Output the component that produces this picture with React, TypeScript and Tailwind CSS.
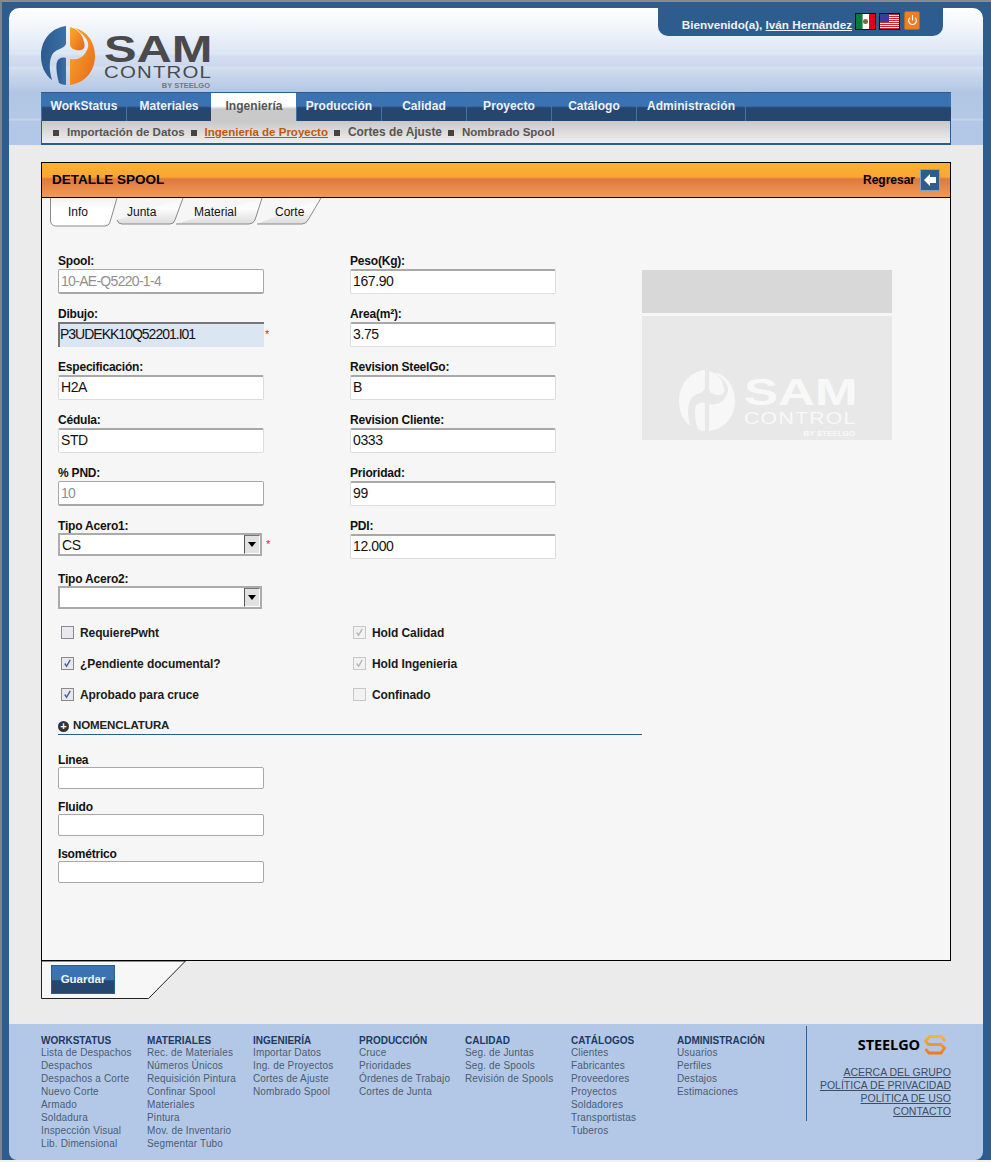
import React from "react";

const nav = ["WorkStatus", "Materiales", "Ingeniería", "Producción", "Calidad", "Proyecto", "Catálogo", "Administración"];
const footer: [string, string[]][] = [
  ["WORKSTATUS", ["Lista de Despachos", "Despachos", "Despachos a Corte", "Nuevo Corte", "Armado", "Soldadura", "Inspección Visual", "Lib. Dimensional"]],
  ["MATERIALES", ["Rec. de Materiales", "Números Únicos", "Requisición Pintura", "Confinar Spool", "Materiales", "Pintura", "Mov. de Inventario", "Segmentar Tubo"]],
  ["INGENIERÍA", ["Importar Datos", "Ing. de Proyectos", "Cortes de Ajuste", "Nombrado Spool"]],
  ["PRODUCCIÓN", ["Cruce", "Prioridades", "Órdenes de Trabajo", "Cortes de Junta"]],
  ["CALIDAD", ["Seg. de Juntas", "Seg. de Spools", "Revisión de Spools"]],
  ["CATÁLOGOS", ["Clientes", "Fabricantes", "Proveedores", "Proyectos", "Soldadores", "Transportistas", "Tuberos"]],
  ["ADMINISTRACIÓN", ["Usuarios", "Perfiles", "Destajos", "Estimaciones"]],
];

function LogoMark({ mono, className }: { mono?: boolean; className: string }) {
  const a = mono ? "#f7f7f7" : "url(#lb)";
  const b = mono ? "#f7f7f7" : "url(#lo)";
  return (
    <svg viewBox="0 0 54 59" className={className}>
      {!mono && (
        <defs>
          <linearGradient id="lb" x1="0" y1="0" x2="1" y2="0"><stop offset="0" stopColor="#2b5a8e" /><stop offset="1" stopColor="#3a70a8" /></linearGradient>
          <linearGradient id="lo" x1="0" y1="0" x2="1" y2="1"><stop offset="0" stopColor="#f9ab2e" /><stop offset="0.5" stopColor="#f28a24" /><stop offset="1" stopColor="#e2681c" /></linearGradient>
        </defs>
      )}
      <path d="M25 0C10 2 0 14 0 30c0 10 4 19 11 24-3-10-3-19 0-25 4-7 11-5 14-11Z" fill={a} />
      <path d="M25 59V32c-7-2-9 3-9.500 6-.5 5 .5 12 2.500 19 2 1 5 2 7 2Z" fill={a} />
      <path d="M29 1c5 1 9 4 12 9 4 10 3 13-1 14-5 1-11-1-11-6Z" fill={b} />
      <path d="M34 2c12 3 20 14 20 28 0 15-10 27-25 29V33c7 1 10-1 13-3 8-9 6-15 0-21-3-3-5-5-8-7Z" fill={b} />
    </svg>
  );
}

function Logo() {
  return (
    <div className="flex h-[60px] items-start">
      <LogoMark className="h-[59px] w-[54px]" />
      <div className="mt-[10px] ml-[9px] w-[106px] text-[#4a4a4c]">
        <div className="h-[28px] origin-left scale-x-[1.32] text-[37px] leading-[28px] font-bold">SAM</div>
        <div className="mt-[2px] h-[13px] origin-left scale-x-[1.2] text-[17px] leading-[13px] tracking-[1px] whitespace-nowrap">CONTROL</div>
        <div className="mt-[2px] text-right text-[7.500px] leading-[9px] font-bold text-[#777]">BY STEELGO</div>
      </div>
    </div>
  );
}

function Label({ text }: { text: string }) {
  return <div className="h-[14px] text-[12px] leading-[12px] font-bold tracking-[-0.2px] text-[#111]">{text}</div>;
}

function Field({ label, value, variant = "normal", star }: { label: string; value: string; variant?: "normal" | "disabled" | "focus"; star?: boolean }) {
  const cls =
    variant === "disabled"
      ? "border border-b-2 border-[#a8a8a8] bg-white text-[#8f8f8f] rounded-[2px] tracking-[-0.7px] px-[2px] pt-px"
      : variant === "focus"
        ? "border-t-2 border-l-2 border-[#777] bg-[#dce6f2] text-[#111] tracking-[-1px] pb-[2px]"
        : "border border-t-2 border-[#dcdcdc] border-t-[#a8a8a8] bg-white text-[#111] rounded-[2px] tracking-[-0.4px] px-[2px] pb-[2px]";
  return (
    <div className="h-[53px]">
      <Label text={label} />
      <div className="flex items-center">
        <div className={`flex h-[25px] w-[206px] items-center text-[14px] ${cls}`}>{value}</div>
        {star && <span className="ml-[1px] text-[11px] text-[#e0202c]">*</span>}
      </div>
    </div>
  );
}

function Select({ label, value, star }: { label: string; value: string; star?: boolean }) {
  return (
    <div className="h-[53px]">
      <Label text={label} />
      <div className="-mt-px flex items-center">
        <div className="flex h-[23px] w-[204px] items-center border-2 border-[#ababab] bg-white pl-[2px] text-[14px] tracking-[-0.3px] text-[#111]">
          <span className="pt-[2px]">{value}</span>
          <span className="ml-auto flex h-[19px] w-[16px] items-center justify-center border border-white border-t-[#777] border-l-[#555] bg-[#e2e2e2]">
            <span className="h-0 w-0 border-x-[4px] border-t-[5px] border-x-transparent border-t-black" />
          </span>
        </div>
        {star && <span className="ml-[4px] text-[11px] text-[#e0202c]">*</span>}
      </div>
    </div>
  );
}

function Check({ label, checked, off }: { label: string; checked?: boolean; off?: boolean }) {
  return (
    <div className="flex h-[31px] items-center pl-[3px]">
      <span className={`flex h-[13px] w-[13px] items-center justify-center border ${off ? "border-[#c8c8c8] bg-[#f2f2f2]" : "border-[#8a8a8a] bg-[#e8e8ee]"}`}>
        {checked && (
          <svg viewBox="0 0 12 12" className="h-[11px] w-[11px]">
            <path d="M3 6l2 3 4-7" fill="none" stroke={off ? "#b5b5b5" : "#4a5a96"} strokeWidth="1.500" />
          </svg>
        )}
      </span>
      <span className="ml-[6px] text-[12px] font-bold tracking-[-0.1px] text-[#1a1a1a]">{label}</span>
    </div>
  );
}

function Small({ label }: { label: string }) {
  return (
    <div className="h-[47px]">
      <div className="h-[14px] text-[12px] leading-[14px] font-bold tracking-[-0.2px] text-[#111]">{label}</div>
      <div className="h-[22px] w-[206px] rounded-[2px] border border-[#a8a8a8] bg-white" />
    </div>
  );
}

function Tab({ label, d, w, h, ml, active, tx }: { label: string; d: string; w: number; h: number; ml: string; active?: boolean; tx: string }) {
  return (
    <div className={`relative ${ml} ${active ? "z-10" : ""}`} style={{ width: w, height: h }}>
      <svg viewBox={`0 0 ${w} ${h}`} className="absolute inset-0" style={{ width: w, height: h }}>
        <defs>
          <linearGradient id="tabg" x1="0" y1="0" x2="0" y2="1"><stop offset="0" stopColor="#f6f6f6" /><stop offset="0.4" stopColor="#fdfdfd" /><stop offset="1" stopColor="#dcdcdc" /></linearGradient>
          <linearGradient id="tabw" x1="0" y1="0" x2="0" y2="1"><stop offset="0" stopColor="#f2f2f2" /><stop offset="0.4" stopColor="#ffffff" /></linearGradient>
        </defs>
        <path d={d} fill={active ? "url(#tabw)" : "url(#tabg)"} stroke="#8a8a8a" />
      </svg>
      <span className={`relative block pt-[7px] text-[12px] leading-[14px] text-[#111] ${tx}`}>{label}</span>
    </div>
  );
}

export default function App() {
  return (
    <div className="h-[1162px] w-[991px] overflow-hidden bg-[#f2f2f2] font-['Liberation_Sans',Arial,sans-serif]">
      <div className="h-[1160px] border-t-2 border-l-2 border-t-[#8b8b8b] border-l-[#7b8694] bg-[#2d5d8e] pt-[6px] pr-[8px] pl-[7px]">
        <div className="overflow-hidden rounded-t-[10px] rounded-b-[8px]">
          {/* header */}
          <header className="relative h-[137px] bg-[linear-gradient(180deg,#ffffff_0px,#eef3fa_24px,#dde6f4_44px,#e2e9f5_45px,#d2def0_48px,#ccd9ed_58px,#d5dff0_59px,#c4d3ea_70px,#bccde7_78px,#b0c6e4_84px,#b5c9e6_110px,#c5d5ec_112px,#b3c8e6_113px,#b3c8e6_137px)] pt-[18px] pl-[32px]">
            <div className="absolute top-0 right-[40px] flex h-[28px] w-[285px] justify-end rounded-b-[10px] bg-[#2d5d8e] pr-[23px]">
              <span className="mt-[9px] mr-[1px] text-[11.700px] leading-[16px] font-bold whitespace-nowrap text-[#eef2f7]">
                Bienvenido(a), <span className="underline">Iván Hernández</span>
              </span>
              <svg viewBox="0 0 21 17" className="mt-[5px] ml-[2px] h-[17px] w-[21px]">
                <rect width="21" height="17" fill="#111" />
                <rect x="1" y="1" width="6.500" height="15" fill="#0a7a3e" /><rect x="7.500" y="1" width="6.500" height="15" fill="#fff" /><rect x="14" y="1" width="6" height="15" fill="#e4001b" />
                <circle cx="10.500" cy="8.500" r="2.500" fill="#7a6a3a" />
              </svg>
              <svg viewBox="0 0 21 17" className="mt-[5px] ml-[3px] h-[17px] w-[21px]">
                <rect width="21" height="17" fill="#111" />
                <rect x="1" y="1" width="19" height="15" fill="#fff" />
                {[1, 3, 5, 7, 9, 11, 13, 15].map((y) => <rect key={y} x="1" y={y} width="19" height="1" fill="#d8222e" />)}
                <rect x="1" y="1" width="9" height="8" fill="#3c3b9c" />
              </svg>
              <span className="mt-[3px] ml-[4px] flex h-[19px] w-[16px] items-center justify-center rounded-[2px] border border-[#b5651d] bg-[#ef7d22]">
                <svg viewBox="0 0 12 14" className="h-[13px] w-[11px]">
                  <path d="M6 1v6M3.200 4A4.200 4.200 0 1 0 8.800 4" fill="none" stroke="#fff" strokeWidth="1.200" />
                </svg>
              </span>
            </div>
            <Logo />
            <nav className="mt-[6px] h-[53px] w-[910px]">
              <div className="flex h-[29px] border-t border-[#2d5d8e] bg-[linear-gradient(180deg,#3a72b2_0px,#3a72b2_13px,#2c5a8e_14px,#24466f_15px,#24466f_100%)]">
                {nav.map((n, i) => (
                  <div
                    key={n}
                    className={`flex items-center justify-center border-l pb-[2px] text-[12px] font-bold tracking-[0.05px] ${
                      i === 7 ? "w-[110px] border-r" : "w-[85px]"
                    } ${i === 2
                      ? "border-transparent bg-[linear-gradient(180deg,#fff_0px,#fff_13px,#c9c9c9_16px,#c9c9c9_100%)] text-[#555]"
                      : "border-[#3f74ab] text-[#eef2f7]"}`}
                  >
                    {n}
                  </div>
                ))}
              </div>
              <div className="flex h-[24px] items-center border-x border-b-2 border-[#2d5d8e] bg-[linear-gradient(180deg,#c8c8c8,#efefef)] pt-px pl-[11px] text-[11.500px] font-bold text-[#555]">
                <i className="mr-[8px] h-[6px] w-[6px] bg-[#444]" />
                <span>Importación de Datos</span>
                <i className="mr-[8px] ml-[6px] h-[6px] w-[6px] bg-[#444]" />
                <span className="text-[#c4560c] underline">Ingeniería de Proyecto</span>
                <i className="mr-[8px] ml-[6px] h-[6px] w-[6px] bg-[#444]" />
                <span className="text-[11.900px]">Cortes de Ajuste</span>
                <i className="mr-[8px] ml-[6px] h-[6px] w-[6px] bg-[#444]" />
                <span>Nombrado Spool</span>
              </div>
            </nav>
          </header>

          {/* content */}
          <main className="h-[879px] bg-[#ebebeb] pt-[17px] pl-[32px]">
            <div className="h-[799px] w-[910px] border border-black bg-[#f6f6f6]">
              <div className="flex h-[35px] items-center justify-between border-b border-black bg-[linear-gradient(180deg,#fbb034_0px,#f8a733_14px,#e0773f_16px,#ef9c55_100%)] pr-[10px] pl-[10px]">
                <span className="text-[13.500px] font-bold text-black">DETALLE SPOOL</span>
                <span className="flex items-center text-[12px] font-bold text-black">
                  Regresar
                  <span className="ml-[5px] flex h-[22px] w-[20px] items-center justify-center border border-[#7fa3cc] bg-[#2d5d8e]">
                    <svg viewBox="0 0 14 14" className="h-[14px] w-[14px]"><path d="M1 7l6-6v3h6v6H7v3Z" fill="#fff" /></svg>
                  </span>
                </span>
              </div>
              <div className="flex h-[32px] pl-[8px]">
                <Tab label="Info" w={68} h={29} ml="" active d="M0.500 0V23a5 5 0 0 0 5 5H55q4 0 5-4L67 0" tx="pl-[18px]" />
                <Tab label="Junta" w={74} h={27} ml="ml-[-8px]" d="M7 22q1 4 5 4H60q4 0 5-4L73 0" tx="pl-[17px]" />
                <Tab label="Material" w={88} h={27} ml="ml-[-9px]" d="M1 26q2 0 4 0H74q4 0 6-4L87 0" tx="pl-[19px]" />
                <Tab label="Corte" w={66} h={27} ml="ml-[-7px]" d="M1 26h45q4 0 6-4L65 0" tx="pl-[19px]" />
              </div>

              <div className="pt-[25px] pl-[16px]">
                <div className="flex">
                  <div className="w-[292px]">
                    <Field label="Spool:" value="10-AE-Q5220-1-4" variant="disabled" />
                    <Field label="Dibujo:" value="P3UDEKK10Q52201.I01" variant="focus" star />
                    <Field label="Especificación:" value="H2A" />
                    <Field label="Cédula:" value="STD" />
                    <Field label="% PND:" value="10" variant="disabled" />
                    <Select label="Tipo Acero1:" value="CS" star />
                    <Select label="Tipo Acero2:" value="" />
                  </div>
                  <div className="w-[292px]">
                    <Field label="Peso(Kg):" value="167.90" />
                    <Field label="Area(m²):" value="3.75" />
                    <Field label="Revision SteelGo:" value="B" />
                    <Field label="Revision Cliente:" value="0333" />
                    <Field label="Prioridad:" value="99" />
                    <Field label="PDI:" value="12.000" />
                  </div>
                  <div className="w-[250px] pt-[15px]">
                    <div className="h-[43px] bg-[#d8d8d8]" />
                    <div className="mt-[3px] flex h-[124px] items-end justify-center bg-[#e8e8e8] pb-[2px] text-[#f8f8f8]">
                      <div className="flex items-start">
                        <LogoMark mono className="h-[63px] w-[56px]" />
                        <div className="mt-[10px] ml-[9px] w-[111px]">
                          <div className="h-[27px] origin-left scale-x-[1.38] text-[37px] leading-[27px] font-bold">SAM</div>
                          <div className="mt-[6px] h-[13px] origin-left scale-x-[1.25] text-[17px] leading-[13px] tracking-[1px] whitespace-nowrap">CONTROL</div>
                          <div className="mt-[4px] text-right text-[8px] leading-[9px] font-bold">BY STEELGO</div>
                        </div>
                      </div>
                    </div>
                  </div>
                </div>
                <div className="mt-[-9px] flex">
                  <div className="w-[292px]">
                    <Check label="RequierePwht" />
                    <Check label="¿Pendiente documental?" checked />
                    <Check label="Aprobado para cruce" checked />
                  </div>
                  <div className="w-[292px]">
                    <Check label="Hold Calidad" checked off />
                    <Check label="Hold Ingenieria" checked off />
                    <Check label="Confinado" off />
                  </div>
                </div>
                <div className="mt-[7px] flex h-[18px] w-[584px] items-center border-b border-[#2d5d8e] pt-px text-[11.500px] font-bold tracking-[-0.1px] text-[#222]">
                  <span className="mr-[4px] flex h-[11px] w-[11px] items-center justify-center rounded-full bg-[#333] text-[11px] leading-[11px] text-white">+</span>
                  NOMENCLATURA
                </div>
                <div className="mt-[18px]">
                  <Small label="Linea" />
                  <Small label="Fluido" />
                  <Small label="Isométrico" />
                </div>
              </div>
            </div>
            <div className="relative h-[38px] w-[145px] pt-[4px] pl-[10px]">
              <svg viewBox="0 0 145 38" className="absolute inset-0 h-[38px] w-[145px]">
                <path d="M0.500 0V37.500H107.500L144.500 0Z" fill="#f7f7f7" stroke="#222" />
              </svg>
              <button className="relative h-[29px] w-[64px] border border-[#2d5d8e] bg-[linear-gradient(180deg,#3a72b2_0%,#3a72b2_50%,#24466f_55%,#24466f_100%)] text-[11.500px] font-bold text-[#eef2f7]">Guardar</button>
            </div>
          </main>

          {/* footer */}
          <footer className="flex h-[136px] bg-[#b3c8e6] pl-[32px]">
            <div className="flex pt-[11px]">
              {footer.map(([h, items]) => (
                <div key={h} className="w-[106px]">
                  <div className="h-[11px] text-[10px] leading-[11px] font-bold text-[#1c3a63]">{h}</div>
                  {items.map((t) => <div key={t} className="h-[13px] text-[10px] leading-[13px] tracking-[0.15px] whitespace-nowrap text-[#4b5c72]">{t}</div>)}
                </div>
              ))}
            </div>
            <div className="mt-[2px] ml-[23px] flex h-[95px] w-[145px] flex-col items-end border-l border-[#2d6199] text-[10.500px] leading-[13px] text-[#3d4d63]">
              <div className="mt-[8px] mr-[4px] mb-[10px] flex items-center">
                <span className="font-['Open_Sans',sans-serif] text-[14.500px] leading-[20px] font-bold tracking-[-0.1px] text-black">STEELGO</span>
                <svg viewBox="0 0 24 22" className="ml-[3px] h-[22px] w-[24px]">
                  <defs>
                    <linearGradient id="sg" x1="0" y1="0" x2="0" y2="1"><stop offset="0" stopColor="#f9b233" /><stop offset="1" stopColor="#ee7a1e" /></linearGradient>
                  </defs>
                  <path d="M22 7 18.500 2.500H6.500L2.500 7l3 3.500H18l3.500 3.500L18 19H6L2.500 15" fill="none" stroke="url(#sg)" strokeWidth="2.800" />
                </svg>
              </div>
              <span className="underline">ACERCA DEL GRUPO</span>
              <span className="underline">POLÍTICA DE PRIVACIDAD</span>
              <span className="underline">POLÍTICA DE USO</span>
              <span className="underline">CONTACTO</span>
            </div>
          </footer>
        </div>
      </div>
    </div>
  );
}
